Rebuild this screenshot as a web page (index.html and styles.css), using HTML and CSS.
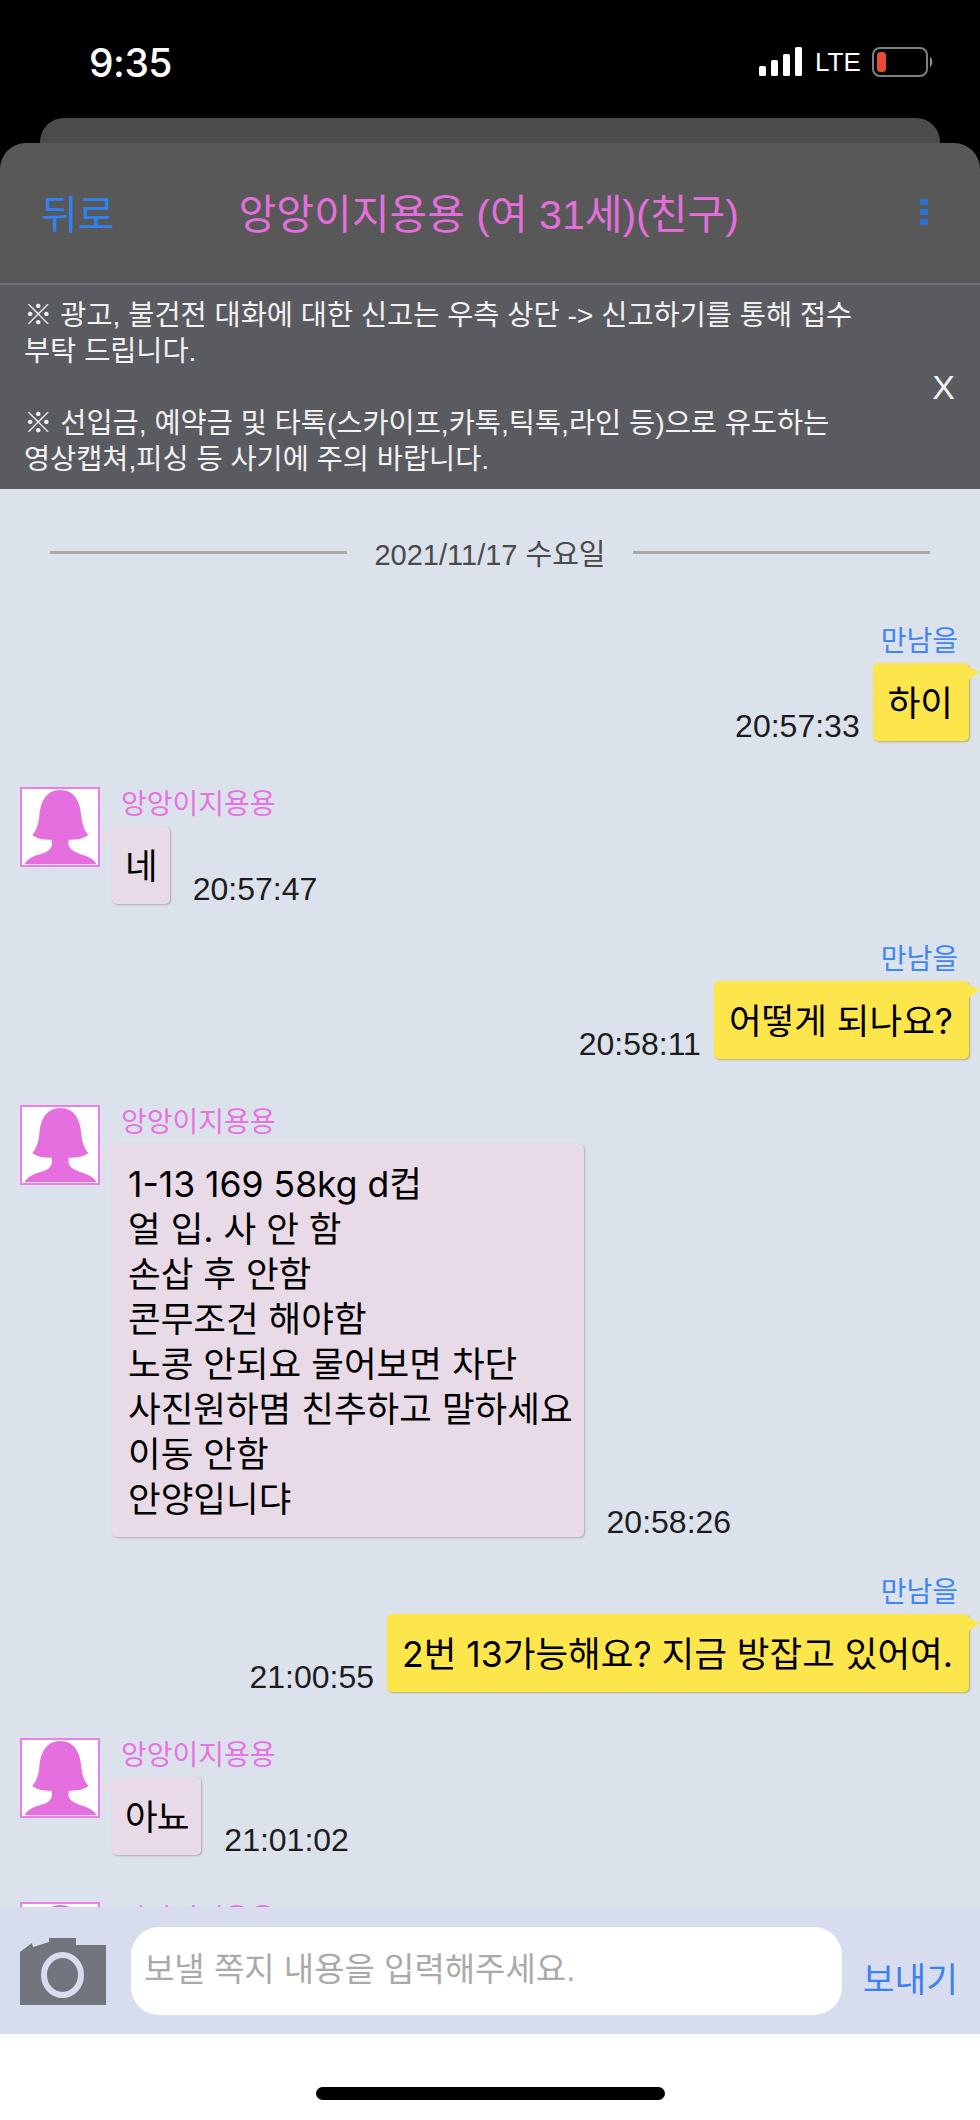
FILE: index.html
```html
<!DOCTYPE html>
<html lang="ko">
<head>
	<meta name="viewport" content="width=device-width">
	<meta charset="UTF-8">
	<title>쪽지</title>
	<link rel="stylesheet" href="styles.css">
</head>
<body>
	<div class="app">
		<div class="status">
			<span class="clock">9:35</span>
			<div class="status-right">
				<svg class="signal" width="44" height="29" viewBox="0 0 44 29">
					<rect x="0" y="19" width="7" height="10" rx="1.5"/>
					<rect x="12" y="13" width="7" height="16" rx="1.5"/>
					<rect x="24" y="7" width="7" height="22" rx="1.5"/>
					<rect x="36" y="0" width="7" height="29" rx="1.5"/>
				</svg>
				<span class="lte">LTE</span>
				<svg class="battery" width="61" height="30" viewBox="0 0 61 30">
					<rect x="1" y="1" width="54" height="28" rx="7" fill="none" stroke="#808080" stroke-width="2"/>
					<rect x="5" y="5" width="9" height="20" rx="3.5" fill="#ea4b35"/>
					<path d="M58 10c3 1 3 9 0 10z" fill="#8c8c8c"/>
				</svg>
			</div>
		</div>
		<div class="card-back"></div>
		<div class="header">
			<span class="back">뒤로</span>
			<span class="title">앙앙이지용용 (여 31세)(친구)</span>
			<span class="dots"><i></i><i></i><i></i></span>
		</div>
		<div class="notice">
			<p>※ 광고, 불건전 대화에 대한 신고는 우측 상단 -&gt; 신고하기를 통해 접수<br>부탁 드립니다.<br><br>※ 선입금, 예약금 및 타톡(스카이프,카톡,틱톡,라인 등)으로 유도하는<br>영상캡쳐,피싱 등 사기에 주의 바랍니다.</p>
			<span class="close">X</span>
		</div>
		<div class="chat">
			<div class="date"><span>2021/11/17 수요일</span></div>

			<div class="msg me">
				<div class="name">만남을</div>
				<div class="line"><span class="time">20:57:33</span><div class="bubble">하이</div></div>
			</div>

			<div class="msg them">
				<svg class="avatar" viewBox="0 0 228 228"><path d="M115 3C158 3 174 38 178 80C180 105 187 125 199 137C190 148 165 152 140 152L139 165C142 185 165 192 190 200C210 207 220 218 224 226L8 226C12 215 25 205 45 198C70 192 88 185 90 165L89 152C65 152 40 148 31 137C43 125 50 105 52 80C56 38 72 3 115 3Z"/></svg>
				<div class="col">
					<div class="name">앙앙이지용용</div>
					<div class="line"><div class="bubble tight">네</div><span class="time">20:57:47</span></div>
				</div>
			</div>

			<div class="msg me">
				<div class="name">만남을</div>
				<div class="line"><span class="time">20:58:11</span><div class="bubble">어떻게 되나요?</div></div>
			</div>

			<div class="msg them">
				<svg class="avatar" viewBox="0 0 228 228"><path d="M115 3C158 3 174 38 178 80C180 105 187 125 199 137C190 148 165 152 140 152L139 165C142 185 165 192 190 200C210 207 220 218 224 226L8 226C12 215 25 205 45 198C70 192 88 185 90 165L89 152C65 152 40 148 31 137C43 125 50 105 52 80C56 38 72 3 115 3Z"/></svg>
				<div class="col">
					<div class="name">앙앙이지용용</div>
					<div class="line"><div class="bubble long">1-13 169 58kg d컵<br>얼 입. 사 안 함<br>손삽 후 안함<br>콘무조건 해야함<br>노콩 안되요 물어보면 차단<br>사진원하몀 친추하고 말하세요<br>이동 안함<br>안양입니댜</div><span class="time">20:58:26</span></div>
				</div>
			</div>

			<div class="msg me">
				<div class="name">만남을</div>
				<div class="line"><span class="time">21:00:55</span><div class="bubble">2번 13가능해요? 지금 방잡고 있어여.</div></div>
			</div>

			<div class="msg them">
				<svg class="avatar" viewBox="0 0 228 228"><path d="M115 3C158 3 174 38 178 80C180 105 187 125 199 137C190 148 165 152 140 152L139 165C142 185 165 192 190 200C210 207 220 218 224 226L8 226C12 215 25 205 45 198C70 192 88 185 90 165L89 152C65 152 40 148 31 137C43 125 50 105 52 80C56 38 72 3 115 3Z"/></svg>
				<div class="col">
					<div class="name">앙앙이지용용</div>
					<div class="line"><div class="bubble tight">아뇨</div><span class="time">21:01:02</span></div>
				</div>
			</div>

			<div class="msg them">
				<svg class="avatar" viewBox="0 0 228 228"><path d="M115 3C158 3 174 38 178 80C180 105 187 125 199 137C190 148 165 152 140 152L139 165C142 185 165 192 190 200C210 207 220 218 224 226L8 226C12 215 25 205 45 198C70 192 88 185 90 165L89 152C65 152 40 148 31 137C43 125 50 105 52 80C56 38 72 3 115 3Z"/></svg>
				<div class="col">
					<div class="name">앙앙이지용용</div>
				</div>
			</div>
		</div>
		<div class="inputbar">
			<svg class="camera" width="86" height="67" viewBox="0 0 86 67">
				<path d="M29 0H56V7H86V67H0V14L12 5L13 9L29 4Z" fill="#72757e"/>
				<ellipse cx="42.5" cy="37" rx="18.5" ry="20" fill="none" stroke="#d7dcef" stroke-width="6"/>
			</svg>
			<div class="field">보낼 쪽지 내용을 입력해주세요.</div>
			<span class="send">보내기</span>
		</div>
		<div class="home"><div class="home-bar"></div></div>
	</div>
</body>
</html>
```

FILE: styles.css
```css
* { box-sizing: border-box; }
body { margin: 0; background: #000; font-family: "Liberation Sans", "Noto Sans CJK KR", sans-serif; }
p { margin: 0; }
.app { width: 980px; height: 2120px; display: flex; flex-direction: column; overflow: hidden; }

.status { height: 118px; flex: none; background: #000; color: #fff; display: flex; justify-content: space-between; padding: 43px 47px 0 89px; }
.clock { font-family: Inter, sans-serif; font-weight: 500; font-size: 39px; line-height: 40px; letter-spacing: -0.5px; }
.status-right { display: flex; align-items: flex-start; padding-top: 4px; }
.signal { fill: #fff; }
.lte { font-size: 26px; line-height: 30px; margin: 0 12px; width: 45px; }

.card-back { height: 25px; flex: none; margin: 0 40px; background: #4b4b4c; border-radius: 24px 24px 0 0; }
.header { height: 142px; flex: none; background: #585858; border-radius: 26px 26px 0 0; border-bottom: 2px solid #6e6e6e; display: flex; align-items: center; padding: 0 52px 2px 41px; font-size: 40px; }
.back { color: #2f82f2; }
.title { color: #e46fdc; margin: 0 0 2px 124px; font-size: 41px; }
.dots { margin-left: auto; display: flex; flex-direction: column; gap: 4px; }
.dots i { display: block; width: 8px; height: 6px; background: #2f70d2; }

.notice { height: 204px; flex: none; background: #5a5b60; color: #f2f2f2; display: flex; justify-content: space-between; align-items: center; padding: 0 25px 0 24px; font-size: 28.4px; line-height: 36px; }
.close { font-size: 34px; }

.chat { flex: 1; min-height: 0; overflow: hidden; background: #dce2ec; padding-top: 43px; }
.date { display: flex; align-items: center; gap: 27px; height: 40px; padding: 0 50px; color: #4a4a4a; font-size: 29px; }
.date::before, .date::after { content: ""; flex: 1; height: 3px; background: #aaa; }

.msg.me { margin-top: 52px; padding-right: 11px; display: flex; flex-direction: column; align-items: flex-end; }
.msg.me .name { color: #3f86f4; margin-right: 11px; }
.msg.them { margin-top: 43px; padding-left: 20px; display: flex; gap: 12px; }
.msg.them .name { color: #e673e0; margin-left: 9px; }
.msg.them + .msg.me { margin-top: 38px; }
.msg.me + .msg.them { margin-top: 46px; }
.msg.them + .msg.them { margin-top: 47px; }
.name { font-size: 28px; line-height: 36px; margin-bottom: 3px; }
.line { display: flex; align-items: flex-end; }
.time { font-size: 32px; line-height: 36px; color: #1c1c1c; margin-bottom: -3px; }
.me .time { margin-right: 13px; }
.them .time { margin-left: 23px; }

.bubble { position: relative; padding: 18px 16px 15px; font-family: Inter, "Noto Sans CJK KR", sans-serif; font-size: 35.5px; line-height: 45px; color: #000; border-radius: 5px; white-space: nowrap; }
.bubble.tight { padding-left: 13px; padding-right: 13px; letter-spacing: -1px; }
.bubble.long { padding-right: 11px; }
.me .bubble { padding-left: 15px; background: #fde54c; box-shadow: 1px 1px 2px #b5ad6b; }
.them .bubble { background: #e8dae6; box-shadow: 1px 1px 2px #aeaab6; }
.me .bubble::after { content: ""; position: absolute; right: -11px; top: 2px; width: 16px; height: 15px; background: #fde54c; clip-path: polygon(0 0, 100% 45%, 30% 100%); }
.them .bubble::after { content: ""; position: absolute; left: -11px; top: 5px; width: 13px; height: 14px; background: #e8dae6; clip-path: polygon(0 35%, 100% 0, 100% 100%); }

.avatar { width: 80px; height: 80px; flex: none; background: #fff; border: 2px solid #ee7ee7; fill: #e66fdf; }

.inputbar { height: 127px; flex: none; background: #d7dcef; display: flex; align-items: flex-start; padding: 20px 22px 0 20px; }
.camera { flex: none; margin-top: 11px; }
.field { width: 711px; height: 88px; margin-left: 25px; background: #fff; border-radius: 28px; padding: 0 14px 0 13px; font-size: 33px; line-height: 86px; color: #aaa; }
.send { margin-left: auto; margin-top: 31px; font-size: 34.5px; line-height: 44px; color: #3d80f0; }

.home { height: 86px; flex: none; background: #fff; display: flex; justify-content: center; padding-top: 53px; }
.home-bar { width: 349px; height: 13px; border-radius: 7px; background: #000; }
```
